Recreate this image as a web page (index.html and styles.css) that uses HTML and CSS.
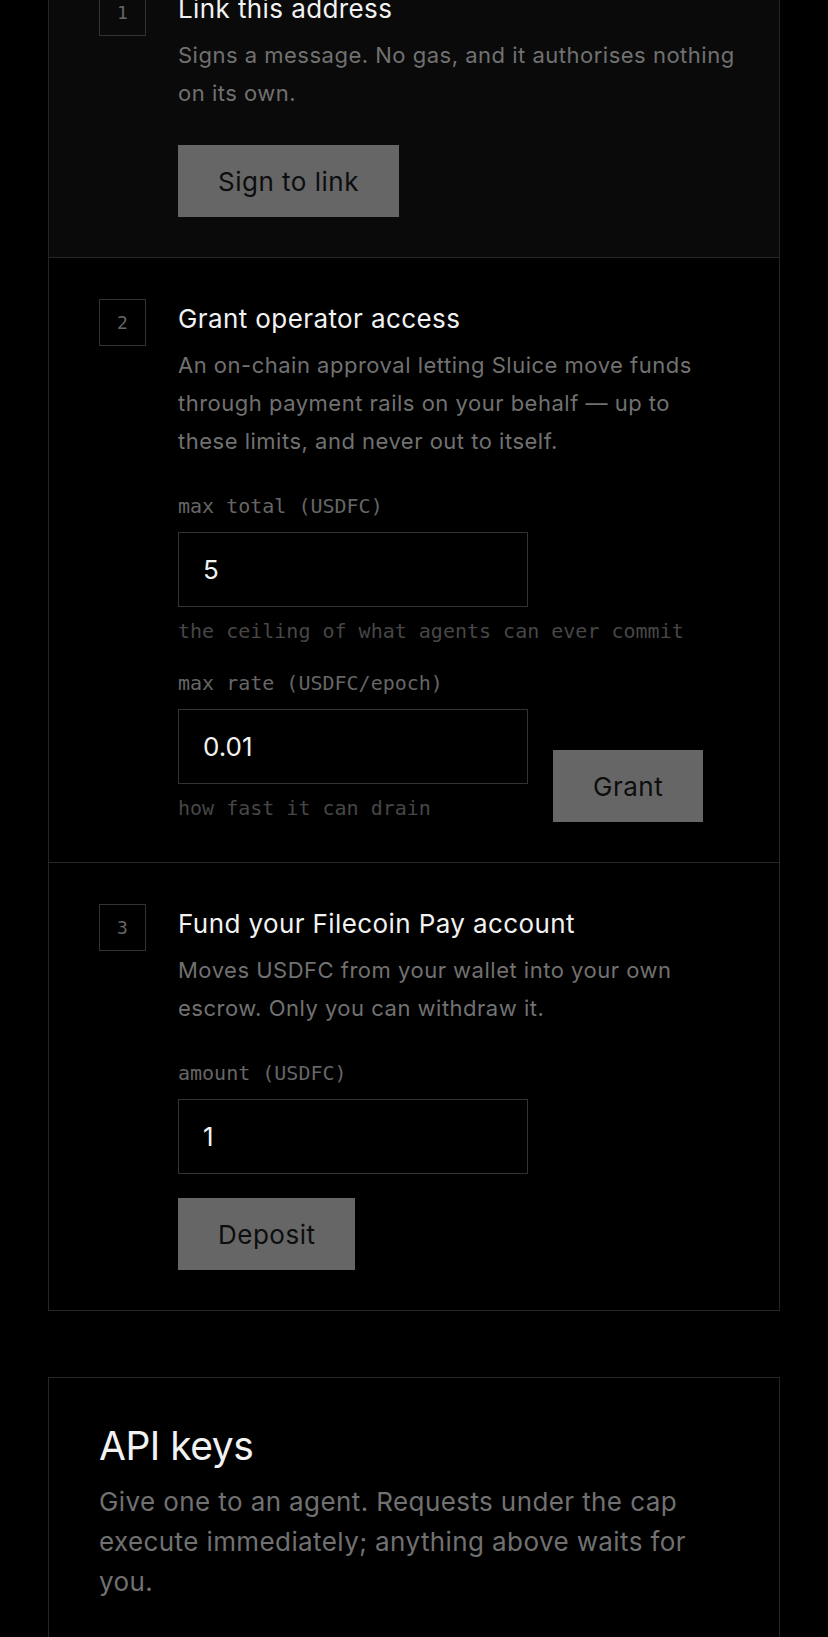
FILE: index.html
```html
<!DOCTYPE html>
<html lang="en">
<head>
    <meta charset="UTF-8">
    <meta name="viewport" content="width=device-width, initial-scale=1.0">
    <title>Sluice - Setup</title>
    <link rel="stylesheet" href="styles.css">
</head>
<body>
    <main class="page">
        <section class="card steps">
            <div class="step step-active">
                <div class="step-num">1</div>
                <div class="step-body">
                    <h3 class="step-title">Link this address</h3>
                    <p class="step-desc">Signs a message. No gas, and it authorises nothing on its own.</p>
                    <button class="btn btn-gap" type="button">Sign to link</button>
                </div>
            </div>

            <div class="step">
                <div class="step-num">2</div>
                <div class="step-body">
                    <h3 class="step-title">Grant operator access</h3>
                    <p class="step-desc">An on-chain approval letting Sluice move funds through payment rails on your behalf — up to these limits, and never out to itself.</p>
                    <div class="grant-row">
                        <div class="fields">
                            <label class="field">
                                <span class="field-label">max total (USDFC)</span>
                                <input class="field-input" type="text" value="5">
                                <span class="field-hint">the ceiling of what agents can ever commit</span>
                            </label>
                            <label class="field">
                                <span class="field-label">max rate (USDFC/epoch)</span>
                                <input class="field-input" type="text" value="0.01">
                                <span class="field-hint">how fast it can drain</span>
                            </label>
                        </div>
                        <button class="btn" type="button">Grant</button>
                    </div>
                </div>
            </div>

            <div class="step">
                <div class="step-num">3</div>
                <div class="step-body">
                    <h3 class="step-title">Fund your Filecoin Pay account</h3>
                    <p class="step-desc">Moves USDFC from your wallet into your own escrow. Only you can withdraw it.</p>
                    <label class="field field-single">
                        <span class="field-label">amount (USDFC)</span>
                        <input class="field-input" type="text" value="1">
                    </label>
                    <button class="btn btn-after-field" type="button">Deposit</button>
                </div>
            </div>
        </section>

        <section class="card keys">
            <h2 class="keys-title">API keys</h2>
            <p class="keys-desc">Give one to an agent. Requests under the cap execute immediately; anything above waits for you.</p>
        </section>
    </main>
</body>
</html>
```

FILE: styles.css
```css
* {
    box-sizing: border-box;
}

body, h2, h3, p {
    margin: 0;
    padding: 0;
}

body {
    background: #000;
    color: #f2f2f2;
    font-family: Inter, "Noto Sans", sans-serif;
    overflow: hidden;
}

.page {
    padding: 0 48px 80px;
}

.card {
    border: 1px solid #262626;
    background: #000;
}

/* the page is scrolled a bit, step 1 starts above the fold */
.steps {
    margin-top: -53px;
}

.step {
    display: grid;
    grid-template-columns: 47px 1fr;
    column-gap: 32px;
    padding: 41px 40px 40px 50px;
    border-top: 1px solid #262626;
}

.step:first-child {
    border-top: none;
}

.step-active {
    background: #0a0a0a;
}

.step-num {
    width: 47px;
    height: 47px;
    border: 1px solid #333;
    display: flex;
    align-items: center;
    justify-content: center;
    font-family: "DejaVu Sans Mono", monospace;
    font-size: 18px;
    color: #666;
}

.step-title {
    font-size: 26px;
    font-weight: 400;
    line-height: 39px;
    letter-spacing: 0.4px;
    color: #f2f2f2;
}

.step-desc {
    max-width: 557px;
    margin-top: 8px;
    font-size: 22px;
    line-height: 38px;
    letter-spacing: 0.5px;
    color: #717171;
}

.btn {
    display: inline-block;
    height: 72px;
    padding: 0 40px;
    border: none;
    border-radius: 0;
    background: #666;
    color: #0d0d0d;
    font-family: Inter, "Noto Sans", sans-serif;
    font-size: 26px;
    letter-spacing: 0.5px;
    cursor: pointer;
}

.btn-gap {
    margin-top: 33px;
}

.btn-after-field {
    margin-top: 24px;
}

.grant-row {
    display: flex;
    align-items: flex-end;
    gap: 25px;
    margin-top: 32px;
}

.fields {
    display: flex;
    flex-direction: column;
    gap: 24px;
    width: 350px;
}

.field {
    display: flex;
    flex-direction: column;
}

.field-single {
    width: 350px;
    margin-top: 32px;
}

.field-label,
.field-hint {
    font-family: "DejaVu Sans Mono", monospace;
    font-size: 20px;
    line-height: 28px;
    white-space: nowrap;
}

.field-label {
    color: #666;
    margin-bottom: 12px;
}

.field-hint {
    color: #474747;
    margin-top: 10px;
}

.field-input {
    width: 100%;
    height: 75px;
    padding: 0 24px;
    border: 1px solid #333;
    border-radius: 0;
    background: #000;
    color: #f2f2f2;
    font-family: Inter, "Noto Sans", sans-serif;
    font-size: 26px;
    outline: none;
}

.keys {
    margin-top: 66px;
    padding: 44px 50px 80px;
}

.keys-title {
    font-size: 39px;
    font-weight: 400;
    line-height: 48px;
    letter-spacing: -0.5px;
    color: #f2f2f2;
}

.keys-desc {
    margin-top: 12px;
    font-size: 26px;
    line-height: 40px;
    letter-spacing: 0.4px;
    color: #717171;
}
```
